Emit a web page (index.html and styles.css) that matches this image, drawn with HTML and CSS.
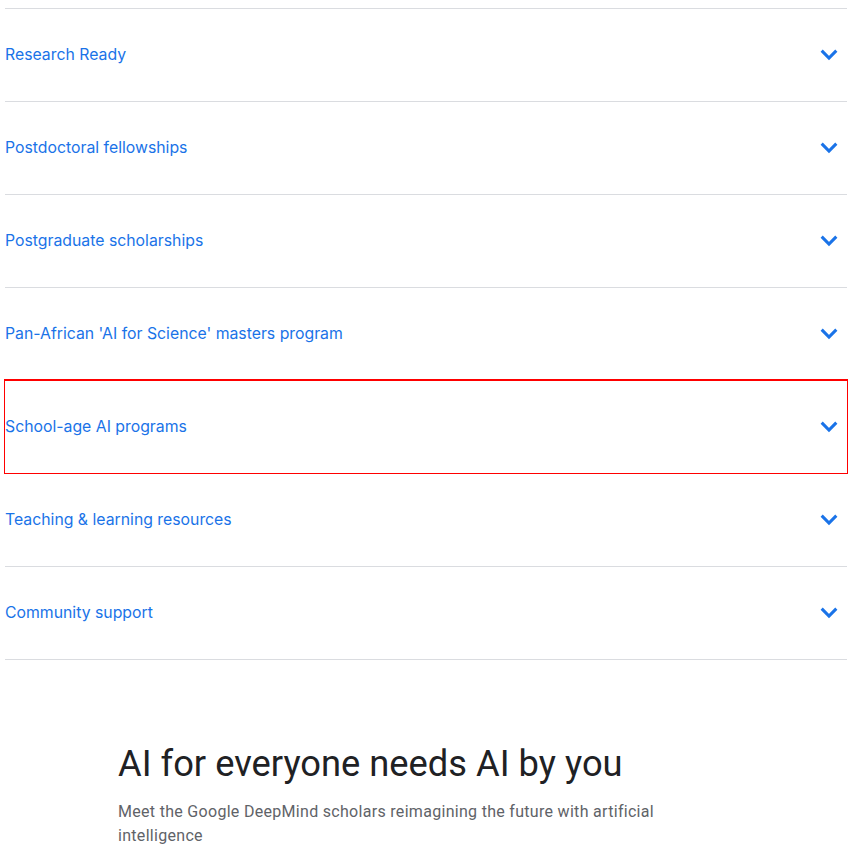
FILE: index.html
```html
<!DOCTYPE html>
<html lang="en">
<head>
<meta charset="utf-8">
<title>Programs</title>
<link rel="stylesheet" href="styles.css">
</head>
<body>
<main class="page">
  <ul class="accordion">
    <li class="item"><button class="item-head"><span class="label">Research Ready</span><svg class="chev" viewBox="0 0 24 24"><path d="M6.5 9.5l5.5 5.5 5.5-5.5"/></svg></button></li>
    <li class="item"><button class="item-head"><span class="label">Postdoctoral fellowships</span><svg class="chev" viewBox="0 0 24 24"><path d="M6.5 9.5l5.5 5.5 5.5-5.5"/></svg></button></li>
    <li class="item"><button class="item-head"><span class="label">Postgraduate scholarships</span><svg class="chev" viewBox="0 0 24 24"><path d="M6.5 9.5l5.5 5.5 5.5-5.5"/></svg></button></li>
    <li class="item"><button class="item-head"><span class="label">Pan-African 'AI for Science' masters program</span><svg class="chev" viewBox="0 0 24 24"><path d="M6.5 9.5l5.5 5.5 5.5-5.5"/></svg></button></li>
    <li class="item item-focus"><button class="item-head"><span class="label">School-age AI programs</span><svg class="chev" viewBox="0 0 24 24"><path d="M6.5 9.5l5.5 5.5 5.5-5.5"/></svg></button></li>
    <li class="item"><button class="item-head"><span class="label">Teaching &amp; learning resources</span><svg class="chev" viewBox="0 0 24 24"><path d="M6.5 9.5l5.5 5.5 5.5-5.5"/></svg></button></li>
    <li class="item"><button class="item-head"><span class="label">Community support</span><svg class="chev" viewBox="0 0 24 24"><path d="M6.5 9.5l5.5 5.5 5.5-5.5"/></svg></button></li>
  </ul>
  <section class="intro">
    <h2 class="intro-title">AI for everyone needs AI by you</h2>
    <p class="intro-text">Meet the Google DeepMind scholars reimagining the future with artificial intelligence</p>
  </section>
</main>
</body>
</html>
```

FILE: styles.css
```css
* { box-sizing: border-box; }
html, body { margin: 0; padding: 0; background: #fff; }
body { font-family: Inter, "Noto Sans", Roboto, sans-serif; }
.page { padding: 8px 5px 0 5px; }
.accordion { list-style: none; margin: 0; padding: 0; border-bottom: 1px solid #dadce0; }
.item { border-top: 1px solid #dadce0; }
.item-focus { box-shadow: 0 0 0 1px #ff0000; border-top-color: #ff0000; position: relative; }
.item-head {
  display: flex; align-items: center; justify-content: space-between;
  width: 100%; height: 92px; padding: 0 2px 2px 0; margin: 0;
  border: 0; background: transparent; cursor: pointer; text-align: left;
  font-family: inherit;
}
.label { font-size: 15.8px; color: #1a73e8; font-weight: 400; letter-spacing: 0; }
.chev { width: 32px; height: 32px; fill: none; stroke: #1a73e8; stroke-width: 2.3; }
.intro { padding: 82px 0 0 113px; }
.intro-title {
  margin: 0; font-family: Roboto, "Noto Sans", sans-serif; font-weight: 400;
  font-size: 36.3px; line-height: 44px; color: #202124; letter-spacing: 0;
}
.intro-text {
  margin: 14px 0 0 0; max-width: 560px; font-family: Roboto, "Noto Sans", sans-serif;
  font-size: 16px; line-height: 24px; color: #5f6368; letter-spacing: 0.3px;
}
```
